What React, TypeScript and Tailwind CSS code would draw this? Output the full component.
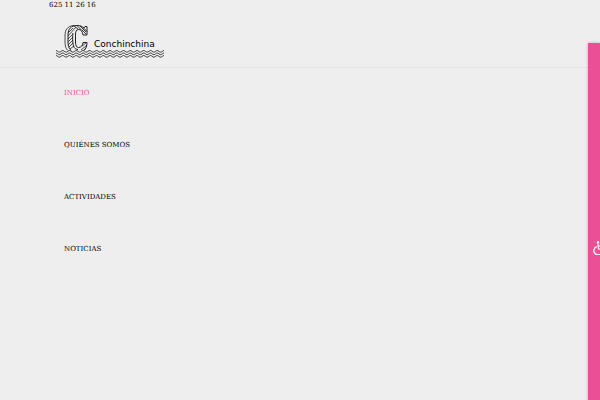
import { clsx } from 'clsx'

const links = [
  { label: 'INICIO', active: true },
  { label: 'QUIÉNES SOMOS' },
  { label: 'ACTIVIDADES' },
  { label: 'NOTICIAS' },
]

// one crest every 6.75 units, sixteen across the logo
const wave = 'c1.1 0 2.275 1.7 3.375 1.7 s2.275 -1.7 3.375 -1.7 '.repeat(16)

const Logo = () => (
  <a href="#" aria-label="Conchinchina" className="relative block w-[108px]">
    <svg viewBox="0 0 108 34" className="block w-full" fill="none" stroke="#222">
      {/* shadow side of the C */}
      <path d="M18 1.500 C11 2 9 6 9 12 V18 C9 22 10 25 12 26.500" strokeWidth="0.8" />
      {/* face of the C */}
      <path d="M15 26.500 C12.500 24 12 21 12 18 V11 C12 5 15 1.500 21 1.500 C24.500 1.500 26.500 2.500 28 4 L29 2.500 H31 V11 H27 C26.500 7.500 25 5.500 22.500 5.500 C20 5.500 19.500 8 19.500 11 V18 C19.500 21.500 20.500 23.500 22.500 23.500 C25 23.500 26.500 22 27 18.500 H31 C31 22 30 24.500 28 26.500" strokeWidth="1" />
      <path d="M17 9 C16.500 11 16.500 19 17.500 22 C18.500 24.500 20 25.500 22 25.500" strokeWidth="1" />
      <path d="M12 9 L17 4 M12 12 L20 3 M12 15 L17 10 M12 18 L17 13 M12 21 L17 16 M13 23 L17 19 M14 25 L18 22" strokeWidth="0.8" />
      <path d="M18 2 l4 3 M21 1.500 l5 5 M24 2 l6 6 M27 3.500 l4 4 M26 6 l4 4" strokeWidth="0.9" />
      <path d="M25 26 l6 -5 M28 26 l2 -2 M26 22 l4 -3" strokeWidth="0.8" />
      {/* sea */}
      <path d={`M0 26.500 ${wave}`} strokeWidth="0.9" />
      <path d={`M0 29 ${wave}`} strokeWidth="0.9" />
      <path d={`M0 31.500 ${wave}`} strokeWidth="0.9" />
    </svg>
    <span className="absolute top-[14px] left-[38px] font-['DejaVu_Sans',sans-serif] text-[9px] leading-[12px] text-black">
      Conchinchina
    </span>
  </a>
)

const App = () => {
  return (
    <div className="relative min-h-screen overflow-hidden bg-[#eeeeee] font-['DejaVu_Serif',serif] text-[7px] leading-[10px] text-black">
      <header className="border-b border-[#e2e2e2] pb-[9px]">
        <div className="px-[49px]">
          <a href="tel:625112616">625 11 26 16</a>
        </div>
        <div className="px-14 pt-[14px]">
          <Logo />
        </div>
      </header>
      <nav className="px-16 pt-5">
        <ul className="flex flex-col gap-[42px]">
          {links.map((link) => (
            <li key={link.label}>
              <a href="#" className={clsx('block', link.active && 'text-[#e9529a]')}>{link.label}</a>
            </li>
          ))}
        </ul>
      </nav>
      {/* accessibility drawer, mostly tucked off the right edge */}
      <button
        type="button"
        aria-label="Accesibilidad"
        className="absolute top-[43px] right-0 -bottom-[52px] flex w-3 items-center overflow-hidden bg-[#eb5097] pl-[5px] shadow-[0_0_3px_rgba(0,0,0,0.25)]"
      >
        <svg viewBox="0 0 14 14" className="size-[14px] shrink-0" fill="none" stroke="#fff" strokeWidth="1.2">
          <circle cx="5" cy="1.3" r="1.2" fill="#fff" stroke="none" />
          <path d="M5 2.5 L5.4 8 H9.5 L11.5 12 L13 11.4 M5 5 H9" />
          <path d="M3.8 5.6 A4.2 4.2 0 1 0 9 11" />
        </svg>
      </button>
    </div>
  )
}

export default App
